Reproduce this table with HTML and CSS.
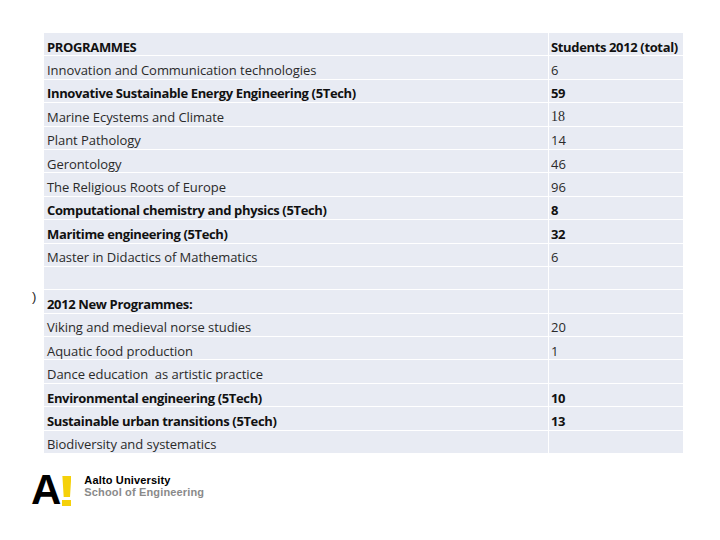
FILE: index.html
```html
<!DOCTYPE html>
<html>
<head>
<meta charset="utf-8">
<link rel="stylesheet" href="styles.css">
</head>
<body>
<div class="page">
  <div class="side"><span class="paren">)</span></div>
  <div class="main">
    <div class="grid">
      <div class="c b">PROGRAMMES</div><div class="c n b">Students 2012 (total)</div>
      <div class="c">Innovation and Communication technologies</div><div class="c n">6</div>
      <div class="c b">Innovative Sustainable Energy Engineering (5Tech)</div><div class="c n b">59</div>
      <div class="c">Marine Ecystems and Climate</div><div class="c n serif">18</div>
      <div class="c">Plant Pathology</div><div class="c n">14</div>
      <div class="c">Gerontology</div><div class="c n">46</div>
      <div class="c">The Religious Roots of Europe</div><div class="c n">96</div>
      <div class="c b">Computational chemistry and physics (5Tech)</div><div class="c n b">8</div>
      <div class="c b">Maritime engineering (5Tech)</div><div class="c n b">32</div>
      <div class="c">Master in Didactics of Mathematics</div><div class="c n">6</div>
      <div class="c"></div><div class="c n"></div>
      <div class="c b">2012 New Programmes:</div><div class="c n"></div>
      <div class="c">Viking and medieval norse studies</div><div class="c n">20</div>
      <div class="c">Aquatic food production</div><div class="c n">1</div>
      <div class="c">Dance education&nbsp; as artistic practice</div><div class="c n"></div>
      <div class="c b">Environmental engineering (5Tech)</div><div class="c n b">10</div>
      <div class="c b">Sustainable urban transitions (5Tech)</div><div class="c n b">13</div>
      <div class="c">Biodiversity and systematics</div><div class="c n"></div>
    </div>
  </div>
</div>
<div class="logo">
  <div class="mark">
    <span class="bigA">A</span>
    <span class="bang"><span class="bar"></span><span class="dot"></span></span>
  </div>
  <div class="words">
    <div class="w1">Aalto University</div>
    <div class="w2">School of Engineering</div>
  </div>
</div>
</body>
</html>
```
FILE: styles.css
```css
html, body {
  margin: 0;
  padding: 0;
  background: #ffffff;
}
body {
  width: 720px;
  height: 540px;
  overflow: hidden;
  font-family: "Open Sans", "Liberation Sans", sans-serif;
  color: #2a2a2a;
}
.page {
  display: flex;
  padding-top: 33px;
}
.side {
  width: 44px;
  position: relative;
}
.paren {
  position: absolute;
  left: 32px;
  top: 256px;
  font-family: "Liberation Sans", sans-serif;
  font-size: 13px;
  color: #222;
}
.main {
  width: 639px;
}
.grid {
  display: grid;
  grid-template-columns: 504px 134px;
  grid-template-rows: repeat(18, minmax(0, 1fr));
  column-gap: 1px;
  row-gap: 1px;
  height: 420px;
  background: #ffffff;
}
.c {
  background: #e8ebf3;
  display: flex;
  align-items: center;
  padding-left: 3px;
  padding-top: 5px;
  min-height: 0;
  line-height: 16px;
  font-size: 13px;
  white-space: nowrap;
  letter-spacing: -0.05px;
}
.n {
  padding-left: 2px;
}
.b {
  font-weight: 700;
  color: #111;
  letter-spacing: -0.36px;
}
.serif {
  font-family: "Liberation Serif", serif;
  font-size: 14px;
}
.logo {
  display: flex;
  align-items: flex-start;
  margin-top: 21px;
  margin-left: 31px;
}
.mark {
  display: flex;
  align-items: flex-start;
  height: 32px;
}
.bigA {
  font-family: "Liberation Sans", sans-serif;
  font-weight: 700;
  font-size: 42px;
  line-height: 32px;
  color: #000;
  letter-spacing: -1px;
}
.bang {
  display: flex;
  flex-direction: column;
  margin-left: 2px;
  padding-top: 2px;
  gap: 3px;
}
.bar {
  width: 9px;
  height: 21px;
  background: #f5d10a;
  clip-path: polygon(0 0, 100% 0, 85% 100%, 15% 100%);
}
.dot {
  width: 9px;
  height: 6px;
  background: #f5d10a;
}
.words {
  margin-left: 13px;
  padding-top: 0px;
  font-family: "Liberation Sans", sans-serif;
  font-weight: 700;
  font-size: 11px;
  line-height: 12px;
  letter-spacing: 0.15px;
}
.w1 {
  color: #000;
}
.w2 {
  color: #8a8a8a;
}
```
